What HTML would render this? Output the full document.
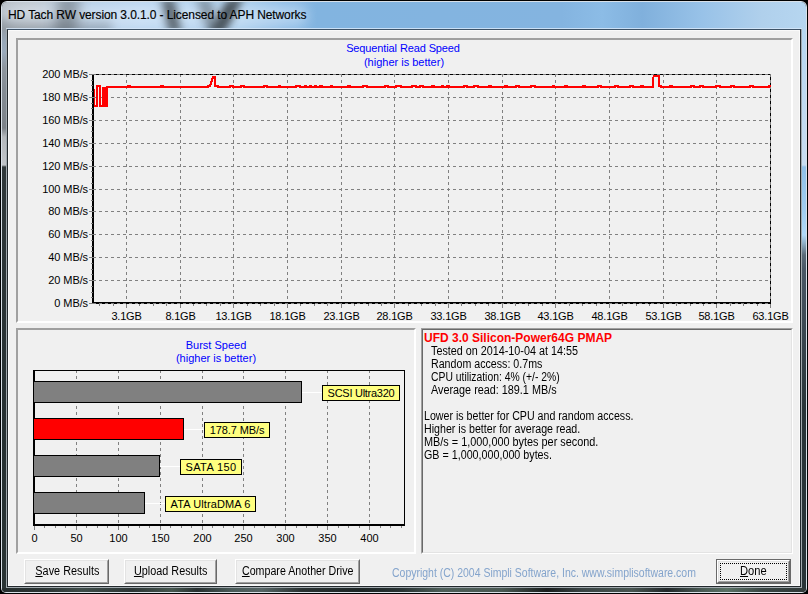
<!DOCTYPE html>
<html><head><meta charset="utf-8">
<style>
html,body{margin:0;padding:0;}
body{width:808px;height:594px;overflow:hidden;background:#000;position:relative;font-family:"Liberation Sans",sans-serif;}
.abs{position:absolute;}
#frame{position:absolute;left:0;top:0;width:808px;height:594px;background:#000;}
#glass{position:absolute;left:1px;top:1px;width:806px;height:592px;border-radius:6px 6px 5px 5px;background:#d8e0e8;overflow:hidden;}
#gin{position:absolute;left:1px;top:1px;width:804px;height:590px;border-radius:5px 5px 4px 4px;overflow:hidden;background:#2c3638;}
#title{position:absolute;left:0;top:0;width:804px;height:27px;overflow:hidden;
 background:linear-gradient(90deg,#b8c0c8 0px,#c0c8d0 30px,#b8d0e8 90px,#bcd6f0 140px,#acceec 240px,#8ebce6 285px,#82b4e0 315px,#84b4e0 560px,#8cbce6 600px,#80b0dc 640px,#98c2e8 700px,#b0d0ec 760px,#b6d6f0 804px);}
#glow{position:absolute;left:2px;top:4px;width:304px;height:20px;border-radius:10px;background:rgba(235,245,255,0.4);filter:blur(6px);}
.streak{position:absolute;top:-4px;height:36px;background:#3a4248;filter:blur(3px);}
#lstrip{position:absolute;left:0;top:26px;width:4px;height:564px;background:linear-gradient(180deg,#949ca4 0px,#98a8b8 14px,#9aaabb 24px,#8e969e 40px,#848c94 62px,#7c8288 100px,#b4b8bc 109px,#c0c4c8 137px,#30383a 139px,#263032 400px,#2a3434 564px);}
#rstrip{position:absolute;right:0;top:27px;width:4px;height:563px;background:linear-gradient(180deg,#b6d6f0 0px,#c8dcf0 136px,#90c0e8 138px,#a0ccf0 180px,#b0d8f8 206px,#90b0c8 214px,#5a6a78 226px,#4a5866 240px,#3c4852 300px,#2a3438 380px,#2a3438 563px);}
#bstrip{position:absolute;left:0;bottom:0;width:804px;height:4px;background:linear-gradient(90deg,#262e2e 0px,#2c3434 40px,#3e4c48 80px,#2e3636 130px,#46564e 170px,#283030 195px,#4a5a58 230px,#566464 260px,#2a3232 300px,#1e2626 360px,#2a3434 400px,#4e5e58 440px,#4a5852 500px,#1a1e1e 545px,#3a4444 580px,#485450 630px,#22282a 665px,#4a5a54 700px,#5a7064 725px,#3a4644 760px,#303838 804px);}
#client{position:absolute;left:7px;top:29px;width:792px;height:556px;border:1px solid #22282c;border-top-color:#3e5266;}
#cin{position:absolute;left:0;top:0;width:790px;height:554px;border:1px solid #fafafa;background:#f0f0f0;}
.gb{position:absolute;border-style:solid;border-width:2px;border-color:#a0a0a0 #fff #fff #a0a0a0;box-sizing:border-box;}
.memo{position:absolute;box-sizing:border-box;border:1px solid;border-color:#a0a0a0 #fff #fff #a0a0a0;}
.memo>div{position:absolute;left:0;top:0;right:0;bottom:0;border:1px solid;border-color:#696969 #e3e3e3 #e3e3e3 #696969;}
.t,.ax,.ct,.inf{position:absolute;white-space:nowrap;font-size:11px;line-height:13px;color:#000;}
.inf{font-size:12px;}
.ct{color:#00f;}
.lbl{text-align:center;height:16px;line-height:16px;}
#ttl{position:absolute;left:8px;top:8px;font-size:12px;line-height:15px;color:#000;white-space:nowrap;letter-spacing:-0.1px;-webkit-text-stroke:0.15px #000;}
.btn{position:absolute;box-sizing:border-box;border:1px solid;border-color:#fff #696969 #696969 #fff;top:559px;height:25px;}
.btn>div{position:absolute;left:0;top:0;right:0;bottom:0;border:1px solid;border-color:#e3e3e3 #a0a0a0 #a0a0a0 #e3e3e3;font-size:12px;line-height:21px;text-align:center;white-space:nowrap;}
.btn span{display:inline-block;}
u{text-decoration:underline;}
#copy{position:absolute;left:392px;top:567px;font-size:12px;line-height:13px;color:#84a4cc;white-space:nowrap;transform-origin:0 0;transform:scaleX(0.873);}
svg{position:absolute;left:0;top:0;}
</style></head><body>
<div id="frame"><div id="glass"><div id="gin">
<div id="title">
  <div class="streak" style="left:-10px;width:120px;top:17px;height:20px;opacity:.3;filter:blur(5px);"></div>
 <div id="glow"></div>
 <div class="streak" style="left:54px;width:22px;top:-6px;height:40px;transform:skewX(-6deg);opacity:.4;filter:blur(6px);"></div>
 <div class="streak" style="left:163px;width:13px;transform:skewX(12deg);opacity:.75;filter:blur(4.5px);"></div>
 <div class="streak" style="left:200px;width:14px;transform:skewX(18deg);opacity:.45;filter:blur(5px);"></div>
 <div class="streak" style="left:216px;width:16px;transform:skewX(-28deg);opacity:.85;filter:blur(4.5px);"></div>
</div>
<div id="lstrip"></div>
<div id="rstrip"></div>
<div id="bstrip"></div>
</div></div></div>
<div id="ttl">HD Tach RW version 3.0.1.0 - Licensed to APH Networks</div>
<div class="abs" style="left:6px;top:28px;width:794px;height:558px;border:1px solid rgba(225,232,238,0.65);border-top-color:rgba(215,232,250,0.85);"></div>
<div id="client"><div id="cin"></div></div>
<div class="gb" style="left:16px;top:38px;width:777px;height:285px;"></div>
<div class="gb" style="left:16px;top:328px;width:400px;height:226px;"></div>
<div class="memo" style="left:421px;top:328px;width:372px;height:226px;"><div></div></div>
<svg width="808" height="594" shape-rendering="crispEdges">
<path d="M93 97.5H770" stroke="#808080" stroke-dasharray="3 3"/>
<path d="M93 120.5H770" stroke="#808080" stroke-dasharray="3 3"/>
<path d="M93 143.5H770" stroke="#808080" stroke-dasharray="3 3"/>
<path d="M93 166.5H770" stroke="#808080" stroke-dasharray="3 3"/>
<path d="M93 189.5H770" stroke="#808080" stroke-dasharray="3 3"/>
<path d="M93 211.5H770" stroke="#808080" stroke-dasharray="3 3"/>
<path d="M93 234.5H770" stroke="#808080" stroke-dasharray="3 3"/>
<path d="M93 257.5H770" stroke="#808080" stroke-dasharray="3 3"/>
<path d="M93 280.5H770" stroke="#808080" stroke-dasharray="3 3"/>
<path d="M126.5 74V302" stroke="#808080" stroke-dasharray="3 3"/>
<path d="M180.5 74V302" stroke="#808080" stroke-dasharray="3 3"/>
<path d="M233.5 74V302" stroke="#808080" stroke-dasharray="3 3"/>
<path d="M287.5 74V302" stroke="#808080" stroke-dasharray="3 3"/>
<path d="M341.5 74V302" stroke="#808080" stroke-dasharray="3 3"/>
<path d="M394.5 74V302" stroke="#808080" stroke-dasharray="3 3"/>
<path d="M448.5 74V302" stroke="#808080" stroke-dasharray="3 3"/>
<path d="M502.5 74V302" stroke="#808080" stroke-dasharray="3 3"/>
<path d="M555.5 74V302" stroke="#808080" stroke-dasharray="3 3"/>
<path d="M609.5 74V302" stroke="#808080" stroke-dasharray="3 3"/>
<path d="M663.5 74V302" stroke="#808080" stroke-dasharray="3 3"/>
<path d="M716.5 74V302" stroke="#808080" stroke-dasharray="3 3"/>
<path d="M93 74.5H770" stroke="#808080" stroke-dasharray="3 3"/>
<path d="M96 74.5H771" stroke="#000" stroke-dasharray="3 3"/>
<path d="M770.5 74V302" stroke="#808080" stroke-dasharray="3 3"/>
<path d="M770.5 77V302" stroke="#000" stroke-dasharray="3 3"/>
<path d="M126.5 304V308" stroke="#808080"/>
<path d="M180.5 304V308" stroke="#808080"/>
<path d="M233.5 304V308" stroke="#808080"/>
<path d="M287.5 304V308" stroke="#808080"/>
<path d="M341.5 304V308" stroke="#808080"/>
<path d="M394.5 304V308" stroke="#808080"/>
<path d="M448.5 304V308" stroke="#808080"/>
<path d="M502.5 304V308" stroke="#808080"/>
<path d="M555.5 304V308" stroke="#808080"/>
<path d="M609.5 304V308" stroke="#808080"/>
<path d="M663.5 304V308" stroke="#808080"/>
<path d="M716.5 304V308" stroke="#808080"/>
<path d="M770.5 304V308" stroke="#808080"/>
<path d="M99.5 304V306" stroke="#808080"/>
<path d="M113.5 304V306" stroke="#808080"/>
<path d="M139.5 304V306" stroke="#808080"/>
<path d="M153.5 304V306" stroke="#808080"/>
<path d="M166.5 304V306" stroke="#808080"/>
<path d="M193.5 304V306" stroke="#808080"/>
<path d="M206.5 304V306" stroke="#808080"/>
<path d="M220.5 304V306" stroke="#808080"/>
<path d="M247.5 304V306" stroke="#808080"/>
<path d="M260.5 304V306" stroke="#808080"/>
<path d="M274.5 304V306" stroke="#808080"/>
<path d="M300.5 304V306" stroke="#808080"/>
<path d="M314.5 304V306" stroke="#808080"/>
<path d="M327.5 304V306" stroke="#808080"/>
<path d="M354.5 304V306" stroke="#808080"/>
<path d="M368.5 304V306" stroke="#808080"/>
<path d="M381.5 304V306" stroke="#808080"/>
<path d="M408.5 304V306" stroke="#808080"/>
<path d="M421.5 304V306" stroke="#808080"/>
<path d="M435.5 304V306" stroke="#808080"/>
<path d="M461.5 304V306" stroke="#808080"/>
<path d="M475.5 304V306" stroke="#808080"/>
<path d="M488.5 304V306" stroke="#808080"/>
<path d="M515.5 304V306" stroke="#808080"/>
<path d="M528.5 304V306" stroke="#808080"/>
<path d="M542.5 304V306" stroke="#808080"/>
<path d="M569.5 304V306" stroke="#808080"/>
<path d="M582.5 304V306" stroke="#808080"/>
<path d="M596.5 304V306" stroke="#808080"/>
<path d="M622.5 304V306" stroke="#808080"/>
<path d="M636.5 304V306" stroke="#808080"/>
<path d="M649.5 304V306" stroke="#808080"/>
<path d="M676.5 304V306" stroke="#808080"/>
<path d="M690.5 304V306" stroke="#808080"/>
<path d="M703.5 304V306" stroke="#808080"/>
<path d="M730.5 304V306" stroke="#808080"/>
<path d="M743.5 304V306" stroke="#808080"/>
<path d="M757.5 304V306" stroke="#808080"/>
<path d="M94 89V106H97V86H100V106H103V88H104V106H105V88H106V106H107V87H111V86H111V87H121V86H121V87H128V86H130V87H150V86H150V87H161V86H163V87H180V86H180V87H182V86H182V87H197V86H197V87H203V86H203V87H208V86H210L213,77H215V86H218V87H230V86H233V87H241V86H244V87H264V86H267V87H274V86H274V87H279V86H280V87H296V86H300V87H305V86H306V87H310V86H311V87H315V86H316V87H320V86H322V87H331V86H332V87H348V86H350V87H363V86H367V87H385V86H388V87H396V86H401V87H412V86H416V87H420V86H423V87H432V86H434V87H442V86H443V87H447V86H449V87H464V86H467V87H474V86H478V87H489V86H491V87H505V86H507V87H516V86H519V87H531V86H535V87H553V86H554V87H565V86H567V87H583V86H585V87H598V86H601V87H615V86H618V87H630V86H633V87H641V86H643V87H650V86H650V87H653V78L654,76H659V86H661V87H668V86H668V87H670V86H672V87H691V86H694V87H700V86H703V87H716V86H720V87H731V86H734V87H750V86H753V87H769V86H771" fill="none" stroke="#f00" stroke-width="2" stroke-linejoin="miter"/>
<rect x="92" y="74" width="2" height="230" fill="#000"/>
<rect x="92" y="302" width="679" height="1" fill="#000"/>
<path d="M93 303.5H770" stroke="#808080" stroke-dasharray="3 3"/>
<path d="M96 303.5H771" stroke="#000" stroke-dasharray="3 3"/>
<path d="M89 74.5H96" stroke="#808080"/>
<path d="M89 97.5H96" stroke="#808080"/>
<path d="M89 120.5H96" stroke="#808080"/>
<path d="M89 143.5H96" stroke="#808080"/>
<path d="M89 166.5H96" stroke="#808080"/>
<path d="M89 189.5H96" stroke="#808080"/>
<path d="M89 211.5H96" stroke="#808080"/>
<path d="M89 234.5H96" stroke="#808080"/>
<path d="M89 257.5H96" stroke="#808080"/>
<path d="M89 280.5H96" stroke="#808080"/>
<path d="M89 303.5H96" stroke="#808080"/>
<path d="M91 80.5H93" stroke="#7a7a7a"/>
<path d="M91 85.5H93" stroke="#7a7a7a"/>
<path d="M91 91.5H93" stroke="#7a7a7a"/>
<path d="M91 103.5H93" stroke="#7a7a7a"/>
<path d="M91 108.5H93" stroke="#7a7a7a"/>
<path d="M91 114.5H93" stroke="#7a7a7a"/>
<path d="M91 126.5H93" stroke="#7a7a7a"/>
<path d="M91 131.5H93" stroke="#7a7a7a"/>
<path d="M91 137.5H93" stroke="#7a7a7a"/>
<path d="M91 148.5H93" stroke="#7a7a7a"/>
<path d="M91 154.5H93" stroke="#7a7a7a"/>
<path d="M91 160.5H93" stroke="#7a7a7a"/>
<path d="M91 171.5H93" stroke="#7a7a7a"/>
<path d="M91 177.5H93" stroke="#7a7a7a"/>
<path d="M91 183.5H93" stroke="#7a7a7a"/>
<path d="M91 194.5H93" stroke="#7a7a7a"/>
<path d="M91 200.5H93" stroke="#7a7a7a"/>
<path d="M91 206.5H93" stroke="#7a7a7a"/>
<path d="M91 217.5H93" stroke="#7a7a7a"/>
<path d="M91 223.5H93" stroke="#7a7a7a"/>
<path d="M91 229.5H93" stroke="#7a7a7a"/>
<path d="M91 240.5H93" stroke="#7a7a7a"/>
<path d="M91 246.5H93" stroke="#7a7a7a"/>
<path d="M91 251.5H93" stroke="#7a7a7a"/>
<path d="M91 263.5H93" stroke="#7a7a7a"/>
<path d="M91 269.5H93" stroke="#7a7a7a"/>
<path d="M91 274.5H93" stroke="#7a7a7a"/>
<path d="M91 286.5H93" stroke="#7a7a7a"/>
<path d="M91 292.5H93" stroke="#7a7a7a"/>
<path d="M91 297.5H93" stroke="#7a7a7a"/>
<path d="M76.5 370V524" stroke="#808080" stroke-dasharray="3 3"/>
<path d="M118.5 370V524" stroke="#808080" stroke-dasharray="3 3"/>
<path d="M160.5 370V524" stroke="#808080" stroke-dasharray="3 3"/>
<path d="M202.5 370V524" stroke="#808080" stroke-dasharray="3 3"/>
<path d="M243.5 370V524" stroke="#808080" stroke-dasharray="3 3"/>
<path d="M285.5 370V524" stroke="#808080" stroke-dasharray="3 3"/>
<path d="M327.5 370V524" stroke="#808080" stroke-dasharray="3 3"/>
<path d="M369.5 370V524" stroke="#808080" stroke-dasharray="3 3"/>
<rect x="33.5" y="370.5" width="371" height="154" fill="none" stroke="#000"/>
<rect x="33" y="370" width="2" height="156" fill="#000"/>
<rect x="33" y="524" width="372" height="2" fill="#000"/>
<path d="M34.5 526V530" stroke="#808080"/>
<path d="M76.5 526V530" stroke="#808080"/>
<path d="M118.5 526V530" stroke="#808080"/>
<path d="M160.5 526V530" stroke="#808080"/>
<path d="M202.5 526V530" stroke="#808080"/>
<path d="M243.5 526V530" stroke="#808080"/>
<path d="M285.5 526V530" stroke="#808080"/>
<path d="M327.5 526V530" stroke="#808080"/>
<path d="M369.5 526V530" stroke="#808080"/>
<path d="M44.5 526V528" stroke="#808080"/>
<path d="M55.5 526V528" stroke="#808080"/>
<path d="M65.5 526V528" stroke="#808080"/>
<path d="M86.5 526V528" stroke="#808080"/>
<path d="M97.5 526V528" stroke="#808080"/>
<path d="M107.5 526V528" stroke="#808080"/>
<path d="M128.5 526V528" stroke="#808080"/>
<path d="M139.5 526V528" stroke="#808080"/>
<path d="M149.5 526V528" stroke="#808080"/>
<path d="M170.5 526V528" stroke="#808080"/>
<path d="M181.5 526V528" stroke="#808080"/>
<path d="M191.5 526V528" stroke="#808080"/>
<path d="M212.5 526V528" stroke="#808080"/>
<path d="M223.5 526V528" stroke="#808080"/>
<path d="M233.5 526V528" stroke="#808080"/>
<path d="M254.5 526V528" stroke="#808080"/>
<path d="M264.5 526V528" stroke="#808080"/>
<path d="M275.5 526V528" stroke="#808080"/>
<path d="M296.5 526V528" stroke="#808080"/>
<path d="M306.5 526V528" stroke="#808080"/>
<path d="M317.5 526V528" stroke="#808080"/>
<path d="M338.5 526V528" stroke="#808080"/>
<path d="M348.5 526V528" stroke="#808080"/>
<path d="M359.5 526V528" stroke="#808080"/>
<path d="M380.5 526V528" stroke="#808080"/>
<path d="M390.5 526V528" stroke="#808080"/>
<path d="M401.5 526V528" stroke="#808080"/>
<path d="M302 392.5H322" stroke="#fff"/>
<rect x="33.5" y="381.5" width="268" height="21" fill="#808080" stroke="#000"/>
<rect x="322.5" y="385.5" width="77" height="15" fill="#ffff80" stroke="#000"/>
<path d="M184 429.5H204" stroke="#fff"/>
<rect x="33.5" y="418.5" width="150" height="21" fill="#ff0000" stroke="#000"/>
<rect x="204.5" y="422.5" width="65" height="15" fill="#ffff80" stroke="#000"/>
<path d="M160 466.5H180" stroke="#fff"/>
<rect x="33.5" y="455.5" width="126" height="21" fill="#808080" stroke="#000"/>
<rect x="180.5" y="459.5" width="61" height="15" fill="#ffff80" stroke="#000"/>
<path d="M145 503.5H165" stroke="#fff"/>
<rect x="33.5" y="492.5" width="111" height="21" fill="#808080" stroke="#000"/>
<rect x="165.5" y="496.5" width="90" height="15" fill="#ffff80" stroke="#000"/>
</svg>
<div class="ax" style="right:720px;top:68px;text-align:right;letter-spacing:-0.1px">200 MB/s</div>
<div class="ax" style="right:720px;top:91px;text-align:right;letter-spacing:-0.1px">180 MB/s</div>
<div class="ax" style="right:720px;top:114px;text-align:right;letter-spacing:-0.1px">160 MB/s</div>
<div class="ax" style="right:720px;top:137px;text-align:right;letter-spacing:-0.1px">140 MB/s</div>
<div class="ax" style="right:720px;top:160px;text-align:right;letter-spacing:-0.1px">120 MB/s</div>
<div class="ax" style="right:720px;top:183px;text-align:right;letter-spacing:-0.1px">100 MB/s</div>
<div class="ax" style="right:720px;top:205px;text-align:right;letter-spacing:-0.1px">80 MB/s</div>
<div class="ax" style="right:720px;top:228px;text-align:right;letter-spacing:-0.1px">60 MB/s</div>
<div class="ax" style="right:720px;top:251px;text-align:right;letter-spacing:-0.1px">40 MB/s</div>
<div class="ax" style="right:720px;top:274px;text-align:right;letter-spacing:-0.1px">20 MB/s</div>
<div class="ax" style="right:720px;top:297px;text-align:right;letter-spacing:-0.1px">0 MB/s</div>
<div class="ax" style="left:26.5px;width:200px;top:310px;text-align:center;letter-spacing:-0.2px">3.1GB</div>
<div class="ax" style="left:80.5px;width:200px;top:310px;text-align:center;letter-spacing:-0.2px">8.1GB</div>
<div class="ax" style="left:133.5px;width:200px;top:310px;text-align:center;letter-spacing:-0.2px">13.1GB</div>
<div class="ax" style="left:187.5px;width:200px;top:310px;text-align:center;letter-spacing:-0.2px">18.1GB</div>
<div class="ax" style="left:241.5px;width:200px;top:310px;text-align:center;letter-spacing:-0.2px">23.1GB</div>
<div class="ax" style="left:294.5px;width:200px;top:310px;text-align:center;letter-spacing:-0.2px">28.1GB</div>
<div class="ax" style="left:348.5px;width:200px;top:310px;text-align:center;letter-spacing:-0.2px">33.1GB</div>
<div class="ax" style="left:402.5px;width:200px;top:310px;text-align:center;letter-spacing:-0.2px">38.1GB</div>
<div class="ax" style="left:455.5px;width:200px;top:310px;text-align:center;letter-spacing:-0.2px">43.1GB</div>
<div class="ax" style="left:509.5px;width:200px;top:310px;text-align:center;letter-spacing:-0.2px">48.1GB</div>
<div class="ax" style="left:563.5px;width:200px;top:310px;text-align:center;letter-spacing:-0.2px">53.1GB</div>
<div class="ax" style="left:616.5px;width:200px;top:310px;text-align:center;letter-spacing:-0.2px">58.1GB</div>
<div class="ax" style="left:670.5px;width:200px;top:310px;text-align:center;letter-spacing:-0.2px">63.1GB</div>
<div class="ax" style="left:-65.5px;width:200px;top:532px;text-align:center;">0</div>
<div class="ax" style="left:-23.5px;width:200px;top:532px;text-align:center;">50</div>
<div class="ax" style="left:18.5px;width:200px;top:532px;text-align:center;">100</div>
<div class="ax" style="left:60.5px;width:200px;top:532px;text-align:center;">150</div>
<div class="ax" style="left:102.5px;width:200px;top:532px;text-align:center;">200</div>
<div class="ax" style="left:143.5px;width:200px;top:532px;text-align:center;">250</div>
<div class="ax" style="left:185.5px;width:200px;top:532px;text-align:center;">300</div>
<div class="ax" style="left:227.5px;width:200px;top:532px;text-align:center;">350</div>
<div class="ax" style="left:269.5px;width:200px;top:532px;text-align:center;">400</div>
<div class="ct" style="left:303px;width:200px;top:42px;text-align:center;letter-spacing:-0.12px">Sequential Read Speed</div>
<div class="ct" style="left:304px;width:200px;top:56px;text-align:center;">(higher is better)</div>
<div class="ct" style="left:116px;width:200px;top:339px;text-align:center;">Burst Speed</div>
<div class="ct" style="left:116px;width:200px;top:352px;text-align:center;">(higher is better)</div>
<div class="ax lbl" style="left:322px;top:385px;width:78px;letter-spacing:-0.27px">SCSI Ultra320</div>
<div class="ax lbl" style="left:204px;top:422px;width:66px;letter-spacing:-0.1px">178.7 MB/s</div>
<div class="ax lbl" style="left:180px;top:459px;width:62px;letter-spacing:0.4px">SATA 150</div>
<div class="ax lbl" style="left:165px;top:496px;width:91px;letter-spacing:0.1px">ATA UltraDMA 6</div>
<div class="inf" style="left:424px;top:332px;transform-origin:0 0;transform:scaleX(1.0)"><b style="color:#f00">UFD 3.0 Silicon-Power64G PMAP</b></div>
<div class="inf" style="left:431px;top:345px;transform-origin:0 0;transform:scaleX(0.899)">Tested on 2014-10-04 at 14:55</div>
<div class="inf" style="left:431px;top:358px;transform-origin:0 0;transform:scaleX(0.888)">Random access: 0.7ms</div>
<div class="inf" style="left:431px;top:371px;transform-origin:0 0;transform:scaleX(0.863)">CPU utilization: 4% (+/- 2%)</div>
<div class="inf" style="left:431px;top:384px;transform-origin:0 0;transform:scaleX(0.902)">Average read: 189.1 MB/s</div>
<div class="inf" style="left:424px;top:410px;transform-origin:0 0;transform:scaleX(0.887)">Lower is better for CPU and random access.</div>
<div class="inf" style="left:424px;top:423px;transform-origin:0 0;transform:scaleX(0.887)">Higher is better for average read.</div>
<div class="inf" style="left:424px;top:436px;transform-origin:0 0;transform:scaleX(0.906)">MB/s = 1,000,000 bytes per second.</div>
<div class="inf" style="left:424px;top:449px;transform-origin:0 0;transform:scaleX(0.894)">GB = 1,000,000,000 bytes.</div>
<div class="btn" style="left:24px;width:85px;"><div style="padding-left:2px;box-sizing:border-box"><span style="transform:scaleX(0.905)"><u>S</u>ave Results</span></div></div>
<div class="btn" style="left:124px;width:93px;"><div><span style="transform:scaleX(0.903)"><u>U</u>pload Results</span></div></div>
<div class="btn" style="left:235px;width:125px;"><div><span style="transform:scaleX(0.889);position:relative;left:-2px"><u>C</u>ompare Another Drive</span></div></div>
<div class="abs" style="left:716px;top:559px;width:75px;height:25px;box-sizing:border-box;border:1px solid #696969;">
 <div class="btn" style="left:0;top:0;width:73px;height:23px;"><div style="line-height:19px;"><span style="transform:scaleX(0.93)"><u>D</u>one</span></div></div>
 <div class="abs" style="left:3px;top:3px;width:67px;height:17px;box-sizing:border-box;border:1px dotted #000;"></div>
</div>
<div id="copy">Copyright (C) 2004 Simpli Software, Inc. www.simplisoftware.com</div>
</body></html>
